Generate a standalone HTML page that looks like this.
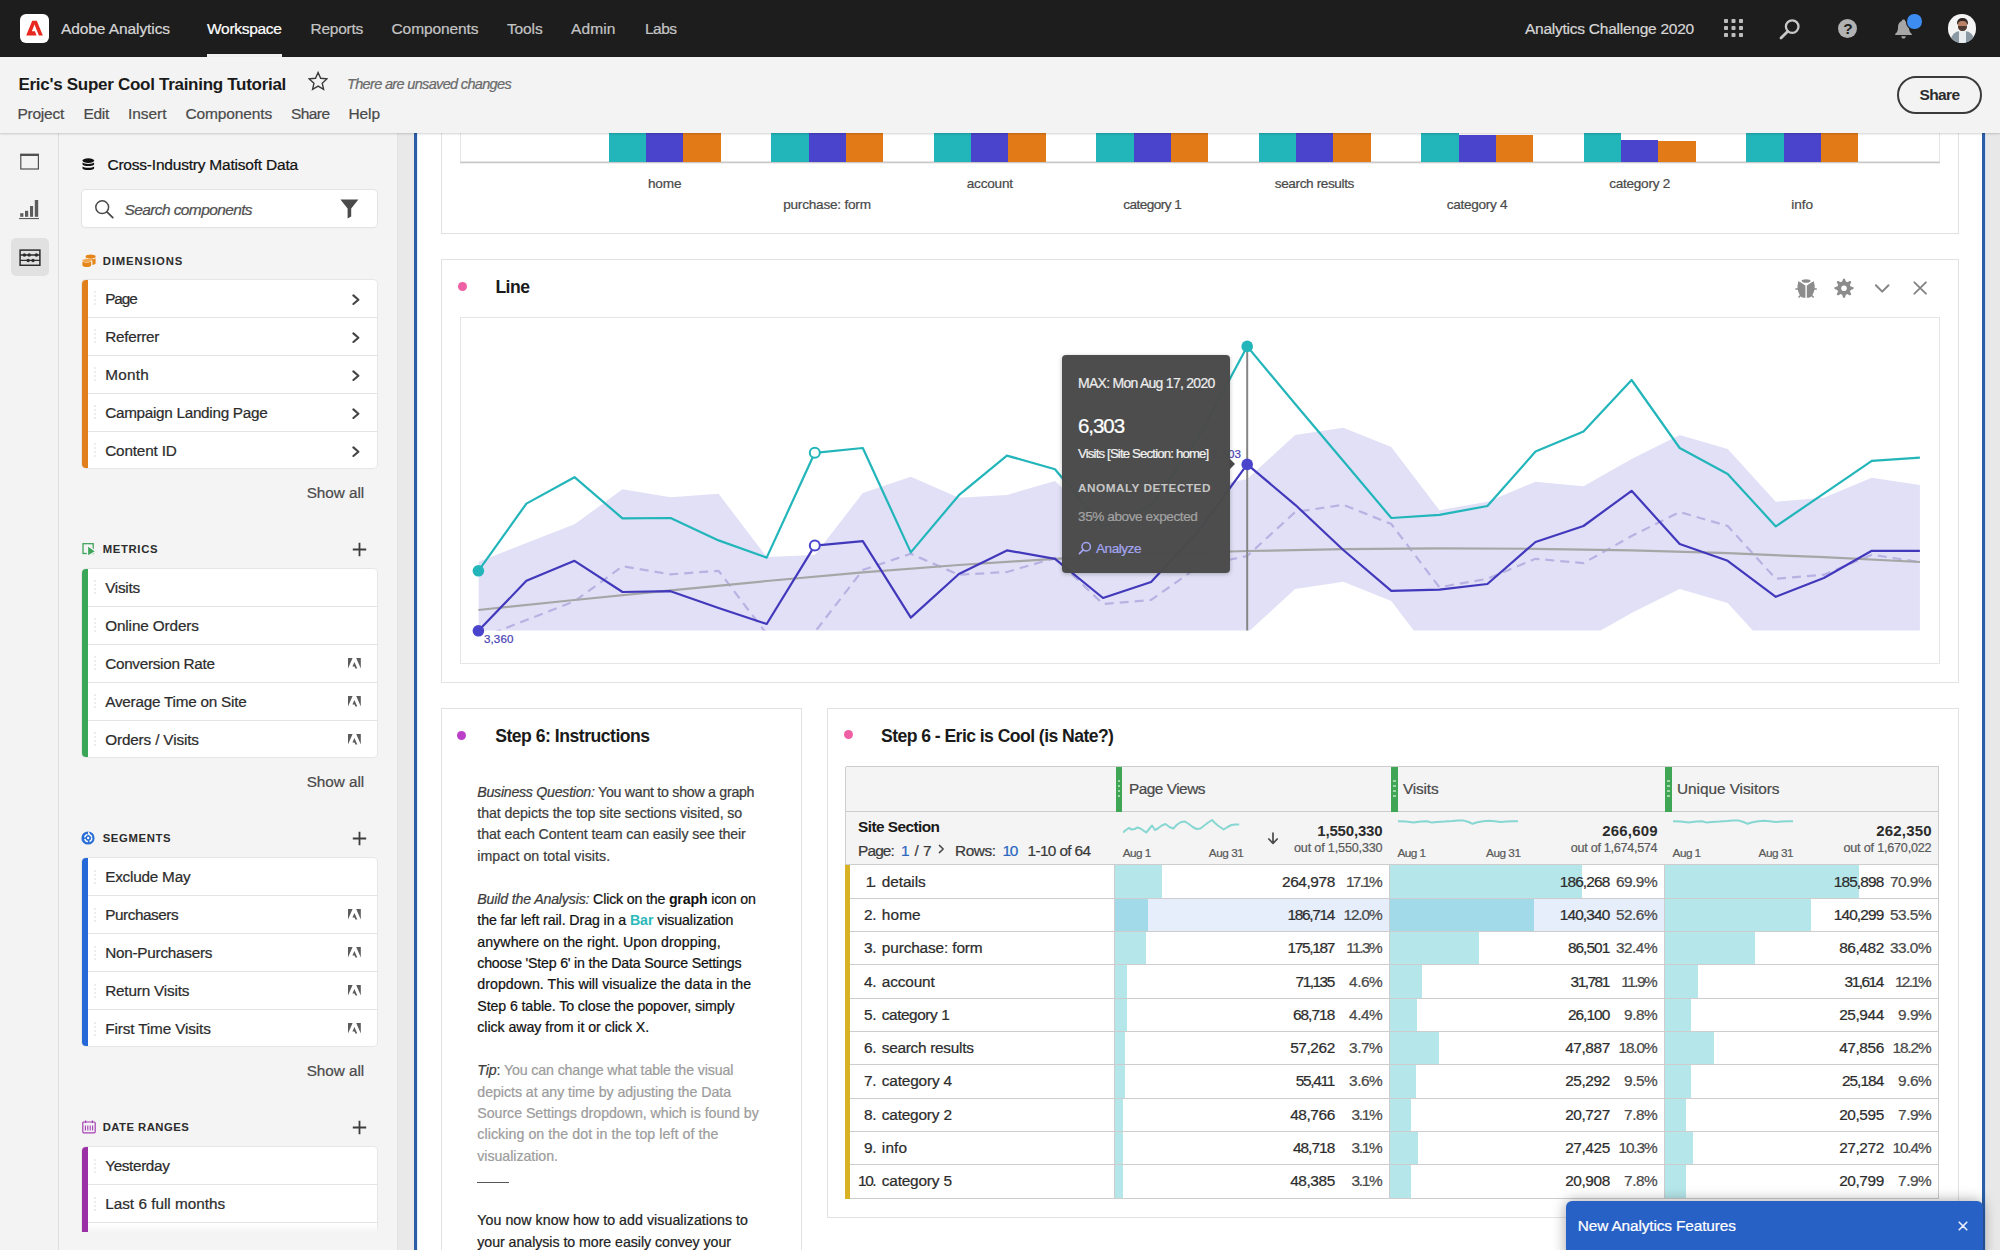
<!DOCTYPE html>
<html><head><meta charset="utf-8"><title>Adobe Analytics Workspace</title>
<style>
html,body{margin:0;padding:0;}
html{width:2000px;height:1250px;overflow:hidden;}
body{width:2000px;height:1250px;overflow:hidden;position:relative;background:#ffffff;font-family:"Liberation Sans",sans-serif;-webkit-font-smoothing:antialiased;}
div,svg{box-sizing:border-box;}
div{-webkit-text-stroke:0.22px currentColor;}
</style></head><body>
<div id="app" style="position:absolute;left:0;top:0;width:2000px;height:1250px;overflow:hidden;background:#fff;">
<div style="position:absolute;left:0px;top:0px;width:2000px;height:57px;background:#1d1d1d;"></div>
<div style="position:absolute;left:20px;top:14px;width:29px;height:29px;background:#fff;border-radius:6px;"></div>
<svg style="position:absolute;left:20px;top:14px" width="29" height="29" viewBox="0 0 29 29"><path d="M12.2 6.8 L16.8 6.8 L22.8 21.6 L18.9 21.6 L14.5 10.6 L11.9 17.2 L14.9 17.2 L16.6 21.6 L6.2 21.6 Z" fill="#e8281e"/></svg>
<div style="position:absolute;top:21.28px;font-size:15.5px;line-height:1;color:#d6d6d6;white-space:pre;letter-spacing:-0.086px;left:61.00px;">Adobe Analytics</div>
<div style="position:absolute;top:21.28px;font-size:15.5px;line-height:1;color:#ffffff;white-space:pre;letter-spacing:-0.294px;left:207.00px;">Workspace</div>
<div style="position:absolute;left:207px;top:54px;width:75px;height:3px;background:#f0f0f0;"></div>
<div style="position:absolute;top:21.28px;font-size:15.5px;line-height:1;color:#c4c4c4;white-space:pre;letter-spacing:-0.253px;left:310.50px;">Reports</div>
<div style="position:absolute;top:21.28px;font-size:15.5px;line-height:1;color:#c4c4c4;white-space:pre;letter-spacing:-0.089px;left:391.50px;">Components</div>
<div style="position:absolute;top:21.28px;font-size:15.5px;line-height:1;color:#c4c4c4;white-space:pre;letter-spacing:-0.137px;left:507.00px;">Tools</div>
<div style="position:absolute;top:21.28px;font-size:15.5px;line-height:1;color:#c4c4c4;white-space:pre;letter-spacing:0.113px;left:571.00px;">Admin</div>
<div style="position:absolute;top:21.28px;font-size:15.5px;line-height:1;color:#c4c4c4;white-space:pre;letter-spacing:-0.528px;left:645.00px;">Labs</div>
<div style="position:absolute;top:21.28px;font-size:15.5px;line-height:1;color:#d6d6d6;white-space:pre;letter-spacing:-0.247px;left:1525.00px;">Analytics Challenge 2020</div>
<svg style="position:absolute;left:1723.5px;top:19px" width="20" height="19"><rect x="0.0" y="0" width="4" height="4" rx="0.8" fill="#bdbdbd"/><rect x="7.5" y="0" width="4" height="4" rx="0.8" fill="#bdbdbd"/><rect x="15.0" y="0" width="4" height="4" rx="0.8" fill="#bdbdbd"/><rect x="0.0" y="7" width="4" height="4" rx="0.8" fill="#bdbdbd"/><rect x="7.5" y="7" width="4" height="4" rx="0.8" fill="#bdbdbd"/><rect x="15.0" y="7" width="4" height="4" rx="0.8" fill="#bdbdbd"/><rect x="0.0" y="14" width="4" height="4" rx="0.8" fill="#bdbdbd"/><rect x="7.5" y="14" width="4" height="4" rx="0.8" fill="#bdbdbd"/><rect x="15.0" y="14" width="4" height="4" rx="0.8" fill="#bdbdbd"/></svg>
<svg style="position:absolute;left:1778px;top:17px" width="24" height="24" viewBox="0 0 24 24"><circle cx="14.2" cy="9.6" r="6.3" fill="none" stroke="#c8c8c8" stroke-width="2.3"/><path d="M9.6 14.4 L3 21" stroke="#c8c8c8" stroke-width="2.8" stroke-linecap="round"/></svg>
<div style="position:absolute;left:1838.3px;top:19.2px;width:19px;height:19px;border-radius:50%;background:#b2b2b2;"></div>
<div style="position:absolute;top:21.48px;font-size:15.5px;line-height:1;color:#1d1d1d;white-space:pre;letter-spacing:0.000px;font-weight:bold;-webkit-text-stroke:0;left:1843.20px;">?</div>
<svg style="position:absolute;left:1894px;top:18px" width="20" height="22" viewBox="0 0 20 22"><path d="M9.5 1.5 C10.6 1.5 11.2 2.2 11.2 3 C14 3.9 15 6.5 15 9.5 C15 13.5 16.5 14.7 17.8 15.8 L17.8 17 L1.2 17 L1.2 15.8 C2.5 14.7 4 13.5 4 9.5 C4 6.5 5 3.9 7.8 3 C7.8 2.2 8.4 1.5 9.5 1.5 Z" fill="#a6a6a6"/><path d="M7.3 18.3 L11.7 18.3 C11.7 19.7 10.7 20.6 9.5 20.6 C8.3 20.6 7.3 19.7 7.3 18.3 Z" fill="#a6a6a6"/></svg>
<div style="position:absolute;left:1907.2px;top:14.3px;width:14.4px;height:14.4px;border-radius:50%;background:#3d8cf2;box-shadow:0 0 0 1.2px #1d1d1d;"></div>
<div style="position:absolute;left:1948px;top:14.2px;width:28.4px;height:28.4px;border-radius:50%;background:#f4f4f4;overflow:hidden;"><div style="position:absolute;left:9px;top:3.5px;width:11px;height:7px;border-radius:5px 5px 2px 2px;background:#2e2622;"></div><div style="position:absolute;left:10px;top:6.5px;width:9px;height:10px;border-radius:4px 4px 5px 5px;background:#b98267;"></div><div style="position:absolute;left:10px;top:12px;width:9px;height:5px;border-radius:0 0 5px 5px;background:#4a3a33;"></div><div style="position:absolute;left:3px;top:17px;width:23px;height:16px;border-radius:9px 9px 0 0;background:#8a99a3;"></div><div style="position:absolute;left:11px;top:17px;width:7px;height:12px;background:#e9edf0;"></div></div>
<div style="position:absolute;left:0px;top:57px;width:2000px;height:76px;background:#f3f3f3;box-shadow:0 1px 2px rgba(0,0,0,0.18);z-index:5;"></div>
<div style="position:absolute;top:75.91px;font-size:17px;line-height:1;color:#1a1a1a;white-space:pre;letter-spacing:-0.290px;font-weight:bold;-webkit-text-stroke:0;left:18.50px;z-index:6;">Eric&#x27;s Super Cool Training Tutorial</div>
<svg style="position:absolute;left:308px;top:71.4px;z-index:6" width="20.2" height="19.3" viewBox="0 0 22 21"><path d="M11 1.6 L13.8 7.9 L20.6 8.6 L15.5 13.2 L17 19.9 L11 16.4 L5 19.9 L6.5 13.2 L1.4 8.6 L8.2 7.9 Z" fill="none" stroke="#3a3a3a" stroke-width="1.5" stroke-linejoin="miter"/></svg>
<div style="position:absolute;top:76.83px;font-size:14.5px;line-height:1;color:#6a6a6a;white-space:pre;letter-spacing:-0.663px;font-style:italic;left:347.00px;z-index:6;">There are unsaved changes</div>
<div style="position:absolute;top:105.88px;font-size:15.5px;line-height:1;color:#4a4a4a;white-space:pre;letter-spacing:-0.249px;left:17.50px;z-index:6;">Project</div>
<div style="position:absolute;top:105.88px;font-size:15.5px;line-height:1;color:#4a4a4a;white-space:pre;letter-spacing:-0.302px;left:83.50px;z-index:6;">Edit</div>
<div style="position:absolute;top:105.88px;font-size:15.5px;line-height:1;color:#4a4a4a;white-space:pre;letter-spacing:-0.044px;left:128.00px;z-index:6;">Insert</div>
<div style="position:absolute;top:105.88px;font-size:15.5px;line-height:1;color:#4a4a4a;white-space:pre;letter-spacing:-0.139px;left:185.50px;z-index:6;">Components</div>
<div style="position:absolute;top:105.88px;font-size:15.5px;line-height:1;color:#4a4a4a;white-space:pre;letter-spacing:-0.573px;left:291.00px;z-index:6;">Share</div>
<div style="position:absolute;top:105.88px;font-size:15.5px;line-height:1;color:#4a4a4a;white-space:pre;letter-spacing:-0.095px;left:348.50px;z-index:6;">Help</div>
<div style="position:absolute;left:1896.8px;top:76.2px;width:85.2px;height:37.6px;border:2px solid #3a3a3a;border-radius:19px;z-index:6;"></div>
<div style="position:absolute;top:87.08px;font-size:15.5px;line-height:1;color:#2c2c2c;white-space:pre;letter-spacing:-0.616px;font-weight:bold;-webkit-text-stroke:0;left:1919.50px;z-index:6;">Share</div>
<div style="position:absolute;left:0px;top:133px;width:58px;height:1117px;background:#f3f3f3;"></div>
<div style="position:absolute;left:58px;top:133px;width:1.2px;height:1117px;background:#dedede;"></div>
<div style="position:absolute;left:59.2px;top:133px;width:337.8px;height:1117px;background:#f4f4f4;"></div>
<div style="position:absolute;left:397px;top:133px;width:1px;height:1117px;background:#e2e2e2;"></div>
<div style="position:absolute;left:398px;top:133px;width:17px;height:1117px;background:#e9e9e9;"></div>
<div style="position:absolute;left:414.3px;top:133px;width:2.6px;height:1117px;background:#2c5da6;"></div>
<div style="position:absolute;left:416.9px;top:133px;width:1px;height:1117px;background:#e3effc;"></div>
<svg style="position:absolute;left:19px;top:152px" width="22" height="20" viewBox="0 0 22 20"><rect x="1.8" y="2.4" width="17.6" height="14.6" fill="none" stroke="#505050" stroke-width="1.2"/><rect x="1.2" y="1.8" width="18.8" height="2.2" fill="#505050"/></svg>
<svg style="position:absolute;left:18px;top:199px" width="23" height="21" viewBox="0 0 23 21"><rect x="2.2" y="14.2" width="3.2" height="3.6" fill="#5c5c5c"/><rect x="7" y="11.8" width="3.2" height="6" fill="#5c5c5c"/><rect x="12" y="7" width="3.1" height="10.8" fill="#5c5c5c"/><rect x="16.8" y="1" width="3.4" height="16.8" fill="#5c5c5c"/><rect x="1" y="19" width="20" height="1.1" fill="#5c5c5c"/></svg>
<div style="position:absolute;left:11px;top:238.2px;width:37.8px;height:37.8px;border-radius:5px;background:#e1e1e1;"></div>
<svg style="position:absolute;left:18.7px;top:248.6px" width="22" height="17.5" viewBox="0 0 22 17.5"><rect x="1.1" y="1.1" width="19.8" height="15.2" fill="none" stroke="#2c2c2c" stroke-width="1.5"/><path d="M1 6 H21 M1 11.4 H21" stroke="#2c2c2c" stroke-width="1.3"/><circle cx="5.4" cy="6" r="1.75" fill="#2c2c2c"/><circle cx="10.2" cy="6" r="1.75" fill="#2c2c2c"/><circle cx="17.4" cy="6" r="1.75" fill="#2c2c2c"/><circle cx="9.2" cy="11.4" r="1.75" fill="#2c2c2c"/><circle cx="14" cy="11.4" r="1.75" fill="#2c2c2c"/></svg>
<svg style="position:absolute;left:82px;top:158px" width="13" height="13" viewBox="0 0 13 13"><ellipse cx="6.3" cy="2.6" rx="5.8" ry="2.3" fill="#111"/><path d="M0.5 4.6 C2 6.4 10.6 6.4 12.1 4.6 L12.1 6.6 C10.6 8.6 2 8.6 0.5 6.6 Z" fill="#111"/><path d="M0.5 8.4 C2 10.2 10.6 10.2 12.1 8.4 L12.1 10.4 C10.6 12.6 2 12.6 0.5 10.4 Z" fill="#111"/></svg>
<div style="position:absolute;top:157.08px;font-size:15.5px;line-height:1;color:#111;white-space:pre;letter-spacing:-0.207px;left:107.40px;">Cross-Industry Matisoft Data</div>
<div style="position:absolute;left:82px;top:190px;width:295.4px;height:36.6px;background:#fff;border-radius:4px;box-shadow:0 0 0 1px #e3e3e3,0 1px 2px rgba(0,0,0,0.06);"></div>
<svg style="position:absolute;left:93.5px;top:199px" width="21" height="20" viewBox="0 0 21 20"><circle cx="8.2" cy="8.2" r="6.4" fill="none" stroke="#4a4a4a" stroke-width="1.5"/><path d="M12.9 12.9 L18.8 18.6" stroke="#4a4a4a" stroke-width="1.8" stroke-linecap="round"/></svg>
<div style="position:absolute;top:201.88px;font-size:15.5px;line-height:1;color:#505050;white-space:pre;letter-spacing:-0.615px;font-style:italic;left:124.60px;">Search components</div>
<svg style="position:absolute;left:339.5px;top:198.5px" width="19" height="20" viewBox="0 0 19 20"><path d="M0.4 0.6 H18.4 L11.2 9.6 V17.6 L7.6 19.6 V9.6 Z" fill="#4a4a4a"/></svg>
<svg style="position:absolute;left:82px;top:253.5px" width="14" height="14" viewBox="0 0 14 14"><ellipse cx="8.6" cy="2.6" rx="5" ry="2.1" fill="#e68619"/><path d="M3.6 4.2 C5 5.8 12.2 5.8 13.6 4.2 L13.6 9.4 C12.8 10.4 11.4 10.8 10.4 10.9 L10.4 6.6 L3.6 6.2 Z" fill="#e68619"/><path d="M0.4 7.4 C1.8 8.8 7.8 8.8 9.2 7.4 L9.2 11.6 C7.8 13.6 1.8 13.6 0.4 11.6 Z" fill="#e68619"/><ellipse cx="4.8" cy="6.6" rx="4.4" ry="1.5" fill="#f4a94e"/></svg>
<div style="position:absolute;top:255.63px;font-size:11.3px;line-height:1;color:#2c2c2c;white-space:pre;letter-spacing:0.892px;font-weight:bold;-webkit-text-stroke:0;left:102.70px;">DIMENSIONS</div>
<div style="position:absolute;left:82px;top:279.5px;width:295px;height:188.2px;background:#fff;border-radius:4px;box-shadow:0 0 0 1px #e6e6e6;overflow:hidden;">
<div style="position:absolute;left:0;top:0;width:6px;height:100%;background:#e07f1c;"></div><div style="position:absolute;left:6px;top:37.4px;width:289px;height:1px;background:#e4e4e4;"></div><div style="position:absolute;left:6px;top:75.4px;width:289px;height:1px;background:#e4e4e4;"></div><div style="position:absolute;left:6px;top:113.4px;width:289px;height:1px;background:#e4e4e4;"></div><div style="position:absolute;left:6px;top:151.4px;width:289px;height:1px;background:#e4e4e4;"></div></div>
<div style="position:absolute;left:93.5px;top:291.3px;width:2px;height:14px;background:repeating-linear-gradient(#ededed 0 2px,#fff 2px 4px);"></div><div style="position:absolute;top:290.55px;font-size:15.3px;line-height:1;color:#2c2c2c;white-space:pre;letter-spacing:-1.033px;left:105.20px;">Page</div>
<svg style="position:absolute;left:351.5px;top:293.7px" width="9" height="12" viewBox="0 0 9 12"><path d="M1.4 1.4 L6.4 5.7 L1.4 10" stroke="#444" stroke-width="2.1" fill="none" stroke-linecap="round" stroke-linejoin="round"/></svg>
<div style="position:absolute;left:93.5px;top:329.3px;width:2px;height:14px;background:repeating-linear-gradient(#ededed 0 2px,#fff 2px 4px);"></div><div style="position:absolute;top:328.55px;font-size:15.3px;line-height:1;color:#2c2c2c;white-space:pre;letter-spacing:-0.264px;left:105.20px;">Referrer</div>
<svg style="position:absolute;left:351.5px;top:331.7px" width="9" height="12" viewBox="0 0 9 12"><path d="M1.4 1.4 L6.4 5.7 L1.4 10" stroke="#444" stroke-width="2.1" fill="none" stroke-linecap="round" stroke-linejoin="round"/></svg>
<div style="position:absolute;left:93.5px;top:367.3px;width:2px;height:14px;background:repeating-linear-gradient(#ededed 0 2px,#fff 2px 4px);"></div><div style="position:absolute;top:366.55px;font-size:15.3px;line-height:1;color:#2c2c2c;white-space:pre;letter-spacing:0.295px;left:105.20px;">Month</div>
<svg style="position:absolute;left:351.5px;top:369.7px" width="9" height="12" viewBox="0 0 9 12"><path d="M1.4 1.4 L6.4 5.7 L1.4 10" stroke="#444" stroke-width="2.1" fill="none" stroke-linecap="round" stroke-linejoin="round"/></svg>
<div style="position:absolute;left:93.5px;top:405.3px;width:2px;height:14px;background:repeating-linear-gradient(#ededed 0 2px,#fff 2px 4px);"></div><div style="position:absolute;top:404.55px;font-size:15.3px;line-height:1;color:#2c2c2c;white-space:pre;letter-spacing:-0.297px;left:105.20px;">Campaign Landing Page</div>
<svg style="position:absolute;left:351.5px;top:407.7px" width="9" height="12" viewBox="0 0 9 12"><path d="M1.4 1.4 L6.4 5.7 L1.4 10" stroke="#444" stroke-width="2.1" fill="none" stroke-linecap="round" stroke-linejoin="round"/></svg>
<div style="position:absolute;left:93.5px;top:443.3px;width:2px;height:14px;background:repeating-linear-gradient(#ededed 0 2px,#fff 2px 4px);"></div><div style="position:absolute;top:442.55px;font-size:15.3px;line-height:1;color:#2c2c2c;white-space:pre;letter-spacing:-0.164px;left:105.20px;">Content ID</div>
<svg style="position:absolute;left:351.5px;top:445.7px" width="9" height="12" viewBox="0 0 9 12"><path d="M1.4 1.4 L6.4 5.7 L1.4 10" stroke="#444" stroke-width="2.1" fill="none" stroke-linecap="round" stroke-linejoin="round"/></svg>
<div style="position:absolute;top:485.05px;font-size:15.3px;line-height:1;color:#4a4a4a;white-space:pre;letter-spacing:-0.042px;left:306.70px;">Show all</div>
<svg style="position:absolute;left:82px;top:541.5px" width="15" height="15" viewBox="0 0 15 15"><rect x="1" y="1.7" width="10.2" height="9.8" fill="none" stroke="#3da55a" stroke-width="1.3"/><path d="M5.5 3.4 L13.9 9.4 L5.5 14.2 Z" fill="#3da55a" stroke="#f4f4f4" stroke-width="1.3"/></svg>
<div style="position:absolute;top:543.63px;font-size:11.3px;line-height:1;color:#2c2c2c;white-space:pre;letter-spacing:0.664px;font-weight:bold;-webkit-text-stroke:0;left:102.70px;">METRICS</div>
<svg style="position:absolute;left:352px;top:541.5px" width="15" height="15" viewBox="0 0 15 15"><path d="M7.5 0.8 V14.2 M0.8 7.5 H14.2" stroke="#3c3c3c" stroke-width="1.8" fill="none"/></svg>
<div style="position:absolute;left:82px;top:568.5px;width:295px;height:188.2px;background:#fff;border-radius:4px;box-shadow:0 0 0 1px #e6e6e6;overflow:hidden;">
<div style="position:absolute;left:0;top:0;width:6px;height:100%;background:#3aa657;"></div><div style="position:absolute;left:6px;top:37.4px;width:289px;height:1px;background:#e4e4e4;"></div><div style="position:absolute;left:6px;top:75.4px;width:289px;height:1px;background:#e4e4e4;"></div><div style="position:absolute;left:6px;top:113.4px;width:289px;height:1px;background:#e4e4e4;"></div><div style="position:absolute;left:6px;top:151.4px;width:289px;height:1px;background:#e4e4e4;"></div></div>
<div style="position:absolute;left:93.5px;top:580.3px;width:2px;height:14px;background:repeating-linear-gradient(#ededed 0 2px,#fff 2px 4px);"></div><div style="position:absolute;top:579.55px;font-size:15.3px;line-height:1;color:#2c2c2c;white-space:pre;letter-spacing:-0.280px;left:105.20px;">Visits</div>
<div style="position:absolute;left:93.5px;top:618.3px;width:2px;height:14px;background:repeating-linear-gradient(#ededed 0 2px,#fff 2px 4px);"></div><div style="position:absolute;top:617.55px;font-size:15.3px;line-height:1;color:#2c2c2c;white-space:pre;letter-spacing:-0.126px;left:105.20px;">Online Orders</div>
<div style="position:absolute;left:93.5px;top:656.3px;width:2px;height:14px;background:repeating-linear-gradient(#ededed 0 2px,#fff 2px 4px);"></div><div style="position:absolute;top:655.55px;font-size:15.3px;line-height:1;color:#2c2c2c;white-space:pre;letter-spacing:-0.297px;left:105.20px;">Conversion Rate</div>
<svg style="position:absolute;left:348px;top:658.0999999999999px" width="13" height="11" viewBox="0 0 13 11"><path d="M0 0 L4.6 0 L0 10.6 Z M8.2 0 L12.8 0 L12.8 10.6 Z M6.4 3.9 L9.3 10.6 L7.4 10.6 L6.5 8.4 L4.4 8.4 Z" fill="#5c5c5c"/></svg>
<div style="position:absolute;left:93.5px;top:694.3px;width:2px;height:14px;background:repeating-linear-gradient(#ededed 0 2px,#fff 2px 4px);"></div><div style="position:absolute;top:693.55px;font-size:15.3px;line-height:1;color:#2c2c2c;white-space:pre;letter-spacing:-0.235px;left:105.20px;">Average Time on Site</div>
<svg style="position:absolute;left:348px;top:696.0999999999999px" width="13" height="11" viewBox="0 0 13 11"><path d="M0 0 L4.6 0 L0 10.6 Z M8.2 0 L12.8 0 L12.8 10.6 Z M6.4 3.9 L9.3 10.6 L7.4 10.6 L6.5 8.4 L4.4 8.4 Z" fill="#5c5c5c"/></svg>
<div style="position:absolute;left:93.5px;top:732.3px;width:2px;height:14px;background:repeating-linear-gradient(#ededed 0 2px,#fff 2px 4px);"></div><div style="position:absolute;top:731.55px;font-size:15.3px;line-height:1;color:#2c2c2c;white-space:pre;letter-spacing:-0.146px;left:105.20px;">Orders / Visits</div>
<svg style="position:absolute;left:348px;top:734.0999999999999px" width="13" height="11" viewBox="0 0 13 11"><path d="M0 0 L4.6 0 L0 10.6 Z M8.2 0 L12.8 0 L12.8 10.6 Z M6.4 3.9 L9.3 10.6 L7.4 10.6 L6.5 8.4 L4.4 8.4 Z" fill="#5c5c5c"/></svg>
<div style="position:absolute;top:774.05px;font-size:15.3px;line-height:1;color:#4a4a4a;white-space:pre;letter-spacing:-0.042px;left:306.70px;">Show all</div>
<svg style="position:absolute;left:80.8px;top:831px" width="14" height="14" viewBox="0 0 14 14"><circle cx="7" cy="7" r="6.6" fill="#2a6fd6"/><circle cx="7.2" cy="7" r="3.6" fill="none" stroke="#fff" stroke-width="1.4" stroke-dasharray="4.2 1.6"/><circle cx="7.2" cy="7" r="1.2" fill="#fff"/><path d="M7 0 L9.4 3.2 L7 4 Z" fill="#f4f4f4"/></svg>
<div style="position:absolute;top:832.93px;font-size:11.3px;line-height:1;color:#2c2c2c;white-space:pre;letter-spacing:0.636px;font-weight:bold;-webkit-text-stroke:0;left:102.70px;">SEGMENTS</div>
<svg style="position:absolute;left:352px;top:830.8px" width="15" height="15" viewBox="0 0 15 15"><path d="M7.5 0.8 V14.2 M0.8 7.5 H14.2" stroke="#3c3c3c" stroke-width="1.8" fill="none"/></svg>
<div style="position:absolute;left:82px;top:857.7px;width:295px;height:188.2px;background:#fff;border-radius:4px;box-shadow:0 0 0 1px #e6e6e6;overflow:hidden;">
<div style="position:absolute;left:0;top:0;width:6px;height:100%;background:#2768d8;"></div><div style="position:absolute;left:6px;top:37.4px;width:289px;height:1px;background:#e4e4e4;"></div><div style="position:absolute;left:6px;top:75.4px;width:289px;height:1px;background:#e4e4e4;"></div><div style="position:absolute;left:6px;top:113.4px;width:289px;height:1px;background:#e4e4e4;"></div><div style="position:absolute;left:6px;top:151.4px;width:289px;height:1px;background:#e4e4e4;"></div></div>
<div style="position:absolute;left:93.5px;top:869.5px;width:2px;height:14px;background:repeating-linear-gradient(#ededed 0 2px,#fff 2px 4px);"></div><div style="position:absolute;top:868.75px;font-size:15.3px;line-height:1;color:#2c2c2c;white-space:pre;letter-spacing:-0.217px;left:105.20px;">Exclude May</div>
<div style="position:absolute;left:93.5px;top:907.5px;width:2px;height:14px;background:repeating-linear-gradient(#ededed 0 2px,#fff 2px 4px);"></div><div style="position:absolute;top:906.75px;font-size:15.3px;line-height:1;color:#2c2c2c;white-space:pre;letter-spacing:-0.438px;left:105.20px;">Purchasers</div>
<svg style="position:absolute;left:348px;top:909.3px" width="13" height="11" viewBox="0 0 13 11"><path d="M0 0 L4.6 0 L0 10.6 Z M8.2 0 L12.8 0 L12.8 10.6 Z M6.4 3.9 L9.3 10.6 L7.4 10.6 L6.5 8.4 L4.4 8.4 Z" fill="#5c5c5c"/></svg>
<div style="position:absolute;left:93.5px;top:945.5px;width:2px;height:14px;background:repeating-linear-gradient(#ededed 0 2px,#fff 2px 4px);"></div><div style="position:absolute;top:944.75px;font-size:15.3px;line-height:1;color:#2c2c2c;white-space:pre;letter-spacing:-0.253px;left:105.20px;">Non-Purchasers</div>
<svg style="position:absolute;left:348px;top:947.3px" width="13" height="11" viewBox="0 0 13 11"><path d="M0 0 L4.6 0 L0 10.6 Z M8.2 0 L12.8 0 L12.8 10.6 Z M6.4 3.9 L9.3 10.6 L7.4 10.6 L6.5 8.4 L4.4 8.4 Z" fill="#5c5c5c"/></svg>
<div style="position:absolute;left:93.5px;top:983.5px;width:2px;height:14px;background:repeating-linear-gradient(#ededed 0 2px,#fff 2px 4px);"></div><div style="position:absolute;top:982.75px;font-size:15.3px;line-height:1;color:#2c2c2c;white-space:pre;letter-spacing:-0.189px;left:105.20px;">Return Visits</div>
<svg style="position:absolute;left:348px;top:985.3px" width="13" height="11" viewBox="0 0 13 11"><path d="M0 0 L4.6 0 L0 10.6 Z M8.2 0 L12.8 0 L12.8 10.6 Z M6.4 3.9 L9.3 10.6 L7.4 10.6 L6.5 8.4 L4.4 8.4 Z" fill="#5c5c5c"/></svg>
<div style="position:absolute;left:93.5px;top:1021.5px;width:2px;height:14px;background:repeating-linear-gradient(#ededed 0 2px,#fff 2px 4px);"></div><div style="position:absolute;top:1020.75px;font-size:15.3px;line-height:1;color:#2c2c2c;white-space:pre;letter-spacing:-0.128px;left:105.20px;">First Time Visits</div>
<svg style="position:absolute;left:348px;top:1023.3px" width="13" height="11" viewBox="0 0 13 11"><path d="M0 0 L4.6 0 L0 10.6 Z M8.2 0 L12.8 0 L12.8 10.6 Z M6.4 3.9 L9.3 10.6 L7.4 10.6 L6.5 8.4 L4.4 8.4 Z" fill="#5c5c5c"/></svg>
<div style="position:absolute;top:1063.45px;font-size:15.3px;line-height:1;color:#4a4a4a;white-space:pre;letter-spacing:-0.042px;left:306.70px;">Show all</div>
<svg style="position:absolute;left:81.5px;top:1120px" width="14" height="14" viewBox="0 0 14 14"><rect x="0.8" y="2" width="12.4" height="10.8" rx="1" fill="none" stroke="#a43fb4" stroke-width="1.2"/><path d="M3.6 0.4 V3 M10.4 0.4 V3" stroke="#a43fb4" stroke-width="1.3"/><path d="M3.4 5.4 V10.6 M5.8 5.4 V10.6 M8.2 5.4 V10.6 M10.6 5.4 V10.6" stroke="#a43fb4" stroke-width="1.1"/></svg>
<div style="position:absolute;top:1122.13px;font-size:11.3px;line-height:1;color:#2c2c2c;white-space:pre;letter-spacing:0.463px;font-weight:bold;-webkit-text-stroke:0;left:102.70px;">DATE RANGES</div>
<svg style="position:absolute;left:352px;top:1120.0px" width="15" height="15" viewBox="0 0 15 15"><path d="M7.5 0.8 V14.2 M0.8 7.5 H14.2" stroke="#3c3c3c" stroke-width="1.8" fill="none"/></svg>
<div style="position:absolute;left:82px;top:1147px;width:295px;height:112.2px;background:#fff;border-radius:4px;box-shadow:0 0 0 1px #e6e6e6;overflow:hidden;">
<div style="position:absolute;left:0;top:0;width:6px;height:100%;background:#9a2fa6;"></div><div style="position:absolute;left:6px;top:37.4px;width:289px;height:1px;background:#e4e4e4;"></div><div style="position:absolute;left:6px;top:75.4px;width:289px;height:1px;background:#e4e4e4;"></div></div>
<div style="position:absolute;left:93.5px;top:1158.8px;width:2px;height:14px;background:repeating-linear-gradient(#ededed 0 2px,#fff 2px 4px);"></div><div style="position:absolute;top:1158.05px;font-size:15.3px;line-height:1;color:#2c2c2c;white-space:pre;letter-spacing:-0.354px;left:105.20px;">Yesterday</div>
<div style="position:absolute;left:93.5px;top:1196.8px;width:2px;height:14px;background:repeating-linear-gradient(#ededed 0 2px,#fff 2px 4px);"></div><div style="position:absolute;top:1196.05px;font-size:15.3px;line-height:1;color:#2c2c2c;white-space:pre;letter-spacing:0.005px;left:105.20px;">Last 6 full months</div>
<div style="position:absolute;left:93.5px;top:1234.8px;width:2px;height:14px;background:repeating-linear-gradient(#ededed 0 2px,#fff 2px 4px);"></div><div style="position:absolute;top:1234.05px;font-size:15.3px;line-height:1;color:#2c2c2c;white-space:pre;letter-spacing:0.000px;left:105.20px;"></div>
<div style="position:absolute;left:88px;top:1224px;width:292px;height:40px;background:linear-gradient(rgba(244,244,244,0) 0,#f4f4f4 9px);"></div>
<div style="position:absolute;left:81px;top:1232px;width:8px;height:20px;background:#f4f4f4;"></div>
<div style="position:absolute;left:1982.3px;top:133px;width:2.6px;height:1117px;background:#2c5da6;"></div>
<div style="position:absolute;left:1984.9px;top:133px;width:15.1px;height:1117px;background:#e8e8e8;"></div>
<div style="position:absolute;left:1984.9px;top:133px;width:1px;height:1117px;background:#cfe0f6;"></div>
<div style="position:absolute;left:441px;top:100px;width:1517.5px;height:134.2px;border:1.5px solid #e2e2e2;"></div>
<div style="position:absolute;left:460px;top:100px;width:1479.5px;height:63px;border:1px solid #e6e6e6;border-bottom:none;"></div>
<div style="position:absolute;left:460px;top:161px;width:1479.5px;height:1px;background:#e4e4e4;"></div>
<div style="position:absolute;left:460px;top:162px;width:1479.5px;height:1px;background:#c9c9c9;"></div>
<div style="position:absolute;left:460px;top:163px;width:1479.5px;height:1px;background:#f0f0f0;"></div>
<div style="position:absolute;left:608.7px;top:133px;width:37.4px;height:29px;background:#22b5ba;"></div>
<div style="position:absolute;left:646.0px;top:133px;width:37.4px;height:29px;background:#4a44cc;"></div>
<div style="position:absolute;left:683.3px;top:133px;width:37.4px;height:29px;background:#e37a18;"></div>
<div style="position:absolute;left:771.2px;top:133px;width:37.4px;height:29px;background:#22b5ba;"></div>
<div style="position:absolute;left:808.5px;top:133px;width:37.4px;height:29px;background:#4a44cc;"></div>
<div style="position:absolute;left:845.8px;top:133px;width:37.4px;height:29px;background:#e37a18;"></div>
<div style="position:absolute;left:933.7px;top:133px;width:37.4px;height:29px;background:#22b5ba;"></div>
<div style="position:absolute;left:971.0px;top:133px;width:37.4px;height:29px;background:#4a44cc;"></div>
<div style="position:absolute;left:1008.3px;top:133px;width:37.4px;height:29px;background:#e37a18;"></div>
<div style="position:absolute;left:1096.2px;top:133px;width:37.4px;height:29px;background:#22b5ba;"></div>
<div style="position:absolute;left:1133.5px;top:133px;width:37.4px;height:29px;background:#4a44cc;"></div>
<div style="position:absolute;left:1170.8px;top:133px;width:37.4px;height:29px;background:#e37a18;"></div>
<div style="position:absolute;left:1258.7px;top:133px;width:37.4px;height:29px;background:#22b5ba;"></div>
<div style="position:absolute;left:1296.0px;top:133px;width:37.4px;height:29px;background:#4a44cc;"></div>
<div style="position:absolute;left:1333.3px;top:133px;width:37.4px;height:29px;background:#e37a18;"></div>
<div style="position:absolute;left:1421.2px;top:133px;width:37.4px;height:29px;background:#22b5ba;"></div>
<div style="position:absolute;left:1458.5px;top:135px;width:37.4px;height:27px;background:#4a44cc;"></div>
<div style="position:absolute;left:1495.8px;top:135px;width:37.4px;height:27px;background:#e37a18;"></div>
<div style="position:absolute;left:1583.7px;top:133px;width:37.4px;height:29px;background:#22b5ba;"></div>
<div style="position:absolute;left:1621.0px;top:140px;width:37.4px;height:22px;background:#4a44cc;"></div>
<div style="position:absolute;left:1658.3px;top:141px;width:37.4px;height:21px;background:#e37a18;"></div>
<div style="position:absolute;left:1746.2px;top:133px;width:37.4px;height:29px;background:#22b5ba;"></div>
<div style="position:absolute;left:1783.5px;top:133px;width:37.4px;height:29px;background:#4a44cc;"></div>
<div style="position:absolute;left:1820.8px;top:133px;width:37.4px;height:29px;background:#e37a18;"></div>
<div style="position:absolute;top:176.69px;font-size:13.6px;line-height:1;color:#4a4a4a;white-space:pre;letter-spacing:-0.105px;left:647.90px;">home</div>
<div style="position:absolute;top:198.29px;font-size:13.6px;line-height:1;color:#4a4a4a;white-space:pre;letter-spacing:-0.222px;left:783.20px;">purchase: form</div>
<div style="position:absolute;top:176.69px;font-size:13.6px;line-height:1;color:#4a4a4a;white-space:pre;letter-spacing:-0.233px;left:966.80px;">account</div>
<div style="position:absolute;top:198.29px;font-size:13.6px;line-height:1;color:#4a4a4a;white-space:pre;letter-spacing:-0.551px;left:1123.20px;">category 1</div>
<div style="position:absolute;top:176.69px;font-size:13.6px;line-height:1;color:#4a4a4a;white-space:pre;letter-spacing:-0.390px;left:1274.80px;">search results</div>
<div style="position:absolute;top:198.29px;font-size:13.6px;line-height:1;color:#4a4a4a;white-space:pre;letter-spacing:-0.311px;left:1446.80px;">category 4</div>
<div style="position:absolute;top:176.69px;font-size:13.6px;line-height:1;color:#4a4a4a;white-space:pre;letter-spacing:-0.271px;left:1609.20px;">category 2</div>
<div style="position:absolute;top:198.29px;font-size:13.6px;line-height:1;color:#4a4a4a;white-space:pre;letter-spacing:0.018px;left:1791.20px;">info</div>
<div style="position:absolute;left:441px;top:258.5px;width:1517.5px;height:424px;border:1.5px solid #e2e2e2;"></div>
<div style="position:absolute;left:458px;top:282px;width:9px;height:9px;border-radius:50%;background:#ee5fa4;"></div>
<div style="position:absolute;top:279.10px;font-size:17.6px;line-height:1;color:#1a1a1a;white-space:pre;letter-spacing:-0.545px;font-weight:bold;-webkit-text-stroke:0;left:495.40px;">Line</div>
<svg style="position:absolute;left:1793px;top:276px" width="26" height="24" viewBox="0 0 26 24"><ellipse cx="13.1" cy="4.9" rx="4.5" ry="1.75" fill="#8c8c8c"/><path d="M5.3 5.3 L8.2 6.2 L13.1 9.2 L18 6.2 L20.9 5.3 L21.2 7.2 C22 9.6 21.9 13 20.8 16 C19.9 18.6 18.6 20.6 17.4 21.2 C15.4 22 10.8 22 8.8 21.2 C7.6 20.6 6.3 18.6 5.4 16 C4.3 13 4.2 9.6 5 7.2 Z" fill="#8c8c8c"/><path d="M6 4.6 L13.1 9.3 L20.2 4.6" fill="none" stroke="#fff" stroke-width="1.15"/><path d="M13.1 9.3 V22.4" stroke="#fff" stroke-width="1.4"/><path d="M2.4 12.9 H6 M20.2 12.9 H23.8 M8.4 18.6 L5.6 21.6 M17.8 18.6 L20.6 21.6" stroke="#8c8c8c" stroke-width="1.5" fill="none"/></svg>
<svg style="position:absolute;left:1833px;top:277px" width="22" height="22" viewBox="0 0 22 22"><g transform="translate(11,11.2)"><path d="M-2 -6 L-0.9 -9.5 L0.9 -9.5 L2 -6 Z" transform="rotate(0)" fill="#8c8c8c"/><path d="M-2 -6 L-0.9 -9.5 L0.9 -9.5 L2 -6 Z" transform="rotate(45)" fill="#8c8c8c"/><path d="M-2 -6 L-0.9 -9.5 L0.9 -9.5 L2 -6 Z" transform="rotate(90)" fill="#8c8c8c"/><path d="M-2 -6 L-0.9 -9.5 L0.9 -9.5 L2 -6 Z" transform="rotate(135)" fill="#8c8c8c"/><path d="M-2 -6 L-0.9 -9.5 L0.9 -9.5 L2 -6 Z" transform="rotate(180)" fill="#8c8c8c"/><path d="M-2 -6 L-0.9 -9.5 L0.9 -9.5 L2 -6 Z" transform="rotate(225)" fill="#8c8c8c"/><path d="M-2 -6 L-0.9 -9.5 L0.9 -9.5 L2 -6 Z" transform="rotate(270)" fill="#8c8c8c"/><path d="M-2 -6 L-0.9 -9.5 L0.9 -9.5 L2 -6 Z" transform="rotate(315)" fill="#8c8c8c"/><circle r="6.9" fill="#8c8c8c"/><circle r="2.8" fill="#fff"/></g></svg>
<svg style="position:absolute;left:1874px;top:283px" width="17" height="11" viewBox="0 0 17 11"><path d="M1.9 2.2 L8.2 8.6 L14.5 2.2" fill="none" stroke="#858585" stroke-width="2" stroke-linecap="round" stroke-linejoin="round"/></svg>
<svg style="position:absolute;left:1913.2px;top:281.2px" width="15" height="14" viewBox="0 0 15 14"><path d="M1.4 1.3 L12.9 12.7 M12.9 1.3 L1.4 12.7" stroke="#858585" stroke-width="1.9" stroke-linecap="round"/></svg>
<div style="position:absolute;left:460px;top:317px;width:1479.5px;height:346.5px;border:1px solid #e6e6e6;"></div>
<svg style="position:absolute;left:0;top:300px" width="2000" height="380" viewBox="0 300 2000 380"><svg x="478.4" y="320" width="1442" height="310.6" viewBox="478.4 320 1442 310.6" overflow="hidden"><polygon points="478.4,561.8 526.4,543.0 574.5,524.3 622.5,489.3 670.6,497.3 718.6,493.8 766.7,557.0 814.8,555.0 862.8,493.0 910.8,476.8 958.9,497.8 1006.9,495.0 1055.0,481.0 1103.0,527.0 1151.1,523.0 1199.2,489.0 1247.2,479.0 1295.2,435.0 1343.3,427.8 1391.3,447.0 1439.4,510.2 1487.4,501.8 1535.5,481.8 1583.5,486.2 1631.6,459.0 1679.7,435.0 1727.7,449.0 1775.8,501.8 1823.8,497.8 1871.8,477.8 1919.9,485.0 1919.9,639.0 1871.8,631.8 1823.8,651.8 1775.8,655.8 1727.7,603.0 1679.7,589.0 1631.6,613.0 1583.5,640.2 1535.5,635.8 1487.4,655.8 1439.4,664.2 1391.3,601.0 1343.3,581.8 1295.2,589.0 1247.2,633.0 1199.2,643.0 1151.1,677.0 1103.0,681.0 1055.0,635.0 1006.9,649.0 958.9,651.8 910.8,630.8 862.8,647.0 814.8,709.0 766.7,711.0 718.6,647.8 670.6,651.3 622.5,643.3 574.5,678.3 526.4,697.0 478.4,715.8" fill="#e1e0f6"/><polyline points="478.4,638.8 526.4,620.0 574.5,601.3 622.5,566.3 670.6,574.3 718.6,570.8 766.7,634.0 814.8,632.0 862.8,570.0 910.8,553.8 958.9,574.8 1006.9,572.0 1055.0,558.0 1103.0,604.0 1151.1,600.0 1199.2,566.0 1247.2,556.0 1295.2,512.0 1343.3,504.8 1391.3,524.0 1439.4,587.2 1487.4,578.8 1535.5,558.8 1583.5,563.2 1631.6,536.0 1679.7,512.0 1727.7,526.0 1775.8,578.8 1823.8,574.8 1871.8,554.8 1919.9,562.0" fill="none" stroke="#b8b2e3" stroke-width="2.2" stroke-dasharray="9 6"/></svg><polyline points="478.4,610 574.5,600 670.8,590.3 766.8,581 862.8,572.4 958.8,565 1054.8,558.8 1150.8,554 1247,551 1343,549.2 1439,548.4 1535,548.8 1632,550.4 1728,553.2 1824,557.2 1920,562" fill="none" stroke="#a6a6a6" stroke-width="2.2"/><path d="M1247.2 346 V630.6" stroke="#858585" stroke-width="2"/><polyline points="478.4,570.8 526.4,503.6 574.5,477.2 622.5,518.4 670.6,518.0 718.6,540.4 766.7,557.6 814.8,452.8 862.8,448.0 910.8,552.4 958.9,495.2 1006.9,455.6 1055.0,469.2 1103.0,527.0 1151.1,505.6 1199.2,436.0 1247.2,346.4 1295.2,404.0 1343.3,461.0 1391.3,518.0 1439.4,514.8 1487.4,506.0 1535.5,451.6 1583.5,431.6 1631.6,380.0 1679.7,448.0 1727.7,474.0 1775.8,526.4 1823.8,493.6 1871.8,460.8 1919.9,457.6" fill="none" stroke="#22b5ba" stroke-width="2.2" stroke-linejoin="round"/><polyline points="478.4,630.8 526.4,580.8 574.5,560.8 622.5,592.0 670.6,591.2 718.6,608.0 766.7,624.0 814.8,545.6 862.8,541.2 910.8,617.6 958.9,574.0 1006.9,550.4 1055.0,558.8 1103.0,598.0 1151.1,582.0 1199.2,530.0 1247.2,464.4 1295.2,504.8 1343.3,550.0 1391.3,590.8 1439.4,589.6 1487.4,584.0 1535.5,542.0 1583.5,526.0 1631.6,490.8 1679.7,544.0 1727.7,560.8 1775.8,596.8 1823.8,578.0 1871.8,550.8 1919.9,550.8" fill="none" stroke="#4238bc" stroke-width="2.2" stroke-linejoin="round"/><circle cx="478.4" cy="570.8" r="5.8" fill="#22b5ba"/><circle cx="478.4" cy="630.8" r="5.8" fill="#4a44cc"/><circle cx="814.8" cy="452.8" r="5" fill="#fff" stroke="#22b5ba" stroke-width="2"/><circle cx="814.8" cy="545.6" r="5" fill="#fff" stroke="#4a44cc" stroke-width="2"/><circle cx="1247.2" cy="346.4" r="5.8" fill="#22b5ba"/><circle cx="1247.2" cy="464.4" r="5.8" fill="#4a44cc"/></svg>
<div style="position:absolute;top:632.98px;font-size:11.6px;line-height:1;color:#4a42b4;white-space:pre;letter-spacing:0.094px;left:484.00px;">3,360</div>
<div style="position:absolute;top:448.48px;font-size:11.6px;line-height:1;color:#4a42b4;white-space:pre;letter-spacing:0.094px;left:1211.50px;">6,303</div>
<div style="position:absolute;left:1062px;top:354.8px;width:167.5px;height:218.5px;background:rgba(74,74,74,0.985);border-radius:4px;box-shadow:0 1px 4px rgba(0,0,0,0.25);"></div>
<svg style="position:absolute;left:1229px;top:458px" width="7" height="12" viewBox="0 0 7 12"><path d="M0 0 L6 6 L0 12 Z" fill="#484848"/></svg>
<div style="position:absolute;top:376.05px;font-size:14px;line-height:1;color:#ececec;white-space:pre;letter-spacing:-0.727px;left:1078.00px;">MAX: Mon Aug 17, 2020</div>
<div style="position:absolute;top:416.05px;font-size:20.5px;line-height:1;color:#ffffff;white-space:pre;letter-spacing:-1.060px;left:1078.00px;">6,303</div>
<div style="position:absolute;top:447.03px;font-size:13.2px;line-height:1;color:#f2f2f2;white-space:pre;letter-spacing:-0.837px;left:1078.00px;">Visits [Site Section: home]</div>
<div style="position:absolute;top:482.91px;font-size:11.8px;line-height:1;color:#c6c6c6;white-space:pre;letter-spacing:0.486px;font-weight:bold;-webkit-text-stroke:0;left:1078.00px;">ANOMALY DETECTED</div>
<div style="position:absolute;top:509.69px;font-size:13.6px;line-height:1;color:#a2a2a2;white-space:pre;letter-spacing:-0.418px;left:1078.00px;">35% above expected</div>
<svg style="position:absolute;left:1077.5px;top:541px" width="14" height="14" viewBox="0 0 14 14"><circle cx="8.2" cy="5.8" r="4.2" fill="none" stroke="#a3a5f2" stroke-width="1.5"/><path d="M5.2 8.8 L1.4 12.6" stroke="#a3a5f2" stroke-width="1.7" stroke-linecap="round"/></svg>
<div style="position:absolute;top:541.69px;font-size:13.6px;line-height:1;color:#a3a5f2;white-space:pre;letter-spacing:-0.484px;left:1096.00px;">Analyze</div>
<div style="position:absolute;left:441px;top:707.5px;width:361px;height:600px;border:1.5px solid #e2e2e2;"></div>
<div style="position:absolute;left:456.7px;top:730.6px;width:9px;height:9px;border-radius:50%;background:#bb3fc9;"></div>
<div style="position:absolute;top:727.50px;font-size:17.6px;line-height:1;color:#1a1a1a;white-space:pre;letter-spacing:-0.490px;font-weight:bold;-webkit-text-stroke:0;left:495.20px;">Step 6: Instructions</div>
<div style="position:absolute;left:477.3px;top:784.58px;font-size:14.2px;line-height:1;color:#3c3c3c;white-space:pre;letter-spacing:-0.273px;"><span style="font-style:italic;">Business Question:</span> You want to show a graph</div>
<div style="position:absolute;left:477.3px;top:805.98px;font-size:14.2px;line-height:1;color:#3c3c3c;white-space:pre;letter-spacing:-0.088px;">that depicts the top site sections visited, so</div>
<div style="position:absolute;left:477.3px;top:827.38px;font-size:14.2px;line-height:1;color:#3c3c3c;white-space:pre;letter-spacing:-0.103px;">that each Content team can easily see their</div>
<div style="position:absolute;left:477.3px;top:848.78px;font-size:14.2px;line-height:1;color:#3c3c3c;white-space:pre;letter-spacing:0.052px;">impact on total visits.</div>
<div style="position:absolute;left:477.3px;top:891.78px;font-size:14.2px;line-height:1;color:#111111;white-space:pre;letter-spacing:-0.177px;"><span style="font-style:italic;color:#3c3c3c;">Build the Analysis:</span> Click on the <span style="font-weight:bold;-webkit-text-stroke:0;">graph</span> icon on</div>
<div style="position:absolute;left:477.3px;top:913.18px;font-size:14.2px;line-height:1;color:#111111;white-space:pre;letter-spacing:-0.093px;">the far left rail. Drag in a <span style="font-weight:bold;-webkit-text-stroke:0;color:#2bb9b9;">Bar</span> visualization</div>
<div style="position:absolute;left:477.3px;top:934.58px;font-size:14.2px;line-height:1;color:#111111;white-space:pre;letter-spacing:0.058px;">anywhere on the right. Upon dropping,</div>
<div style="position:absolute;left:477.3px;top:955.98px;font-size:14.2px;line-height:1;color:#111111;white-space:pre;letter-spacing:-0.205px;">choose &#x27;Step 6&#x27; in the Data Source Settings</div>
<div style="position:absolute;left:477.3px;top:977.38px;font-size:14.2px;line-height:1;color:#111111;white-space:pre;letter-spacing:0.028px;">dropdown. This will visualize the data in the</div>
<div style="position:absolute;left:477.3px;top:998.78px;font-size:14.2px;line-height:1;color:#111111;white-space:pre;letter-spacing:-0.103px;">Step 6 table. To close the popover, simply</div>
<div style="position:absolute;left:477.3px;top:1020.18px;font-size:14.2px;line-height:1;color:#111111;white-space:pre;letter-spacing:-0.053px;">click away from it or click X.</div>
<div style="position:absolute;left:477.3px;top:1063.18px;font-size:14.2px;line-height:1;color:#9c9c9c;white-space:pre;letter-spacing:-0.122px;"><span style="font-style:italic;color:#3c3c3c;">Tip</span><span style="color:#3c3c3c;">:</span> You can change what table the visual</div>
<div style="position:absolute;left:477.3px;top:1084.58px;font-size:14.2px;line-height:1;color:#9c9c9c;white-space:pre;letter-spacing:-0.045px;">depicts at any time by adjusting the Data</div>
<div style="position:absolute;left:477.3px;top:1105.98px;font-size:14.2px;line-height:1;color:#9c9c9c;white-space:pre;letter-spacing:-0.039px;">Source Settings dropdown, which is found by</div>
<div style="position:absolute;left:477.3px;top:1127.38px;font-size:14.2px;line-height:1;color:#9c9c9c;white-space:pre;letter-spacing:0.071px;">clicking on the dot in the top left of the</div>
<div style="position:absolute;left:477.3px;top:1148.78px;font-size:14.2px;line-height:1;color:#9c9c9c;white-space:pre;letter-spacing:-0.043px;">visualization.</div>
<div style="position:absolute;left:477.3px;top:1213.18px;font-size:14.2px;line-height:1;color:#222;white-space:pre;letter-spacing:0.057px;">You now know how to add visualizations to</div>
<div style="position:absolute;left:477.3px;top:1234.58px;font-size:14.2px;line-height:1;color:#222;white-space:pre;letter-spacing:-0.045px;">your analysis to more easily convey your</div>
<div style="position:absolute;left:477.3px;top:1182.2px;width:31.5px;height:1.3px;background:#555;"></div>
<div style="position:absolute;left:826.5px;top:707.5px;width:1132px;height:510.5px;border:1.5px solid #e2e2e2;"></div>
<div style="position:absolute;left:844px;top:730.4px;width:9px;height:9px;border-radius:50%;background:#ee5fa4;"></div>
<div style="position:absolute;top:727.50px;font-size:17.6px;line-height:1;color:#1a1a1a;white-space:pre;letter-spacing:-0.558px;font-weight:bold;-webkit-text-stroke:0;left:881.00px;">Step 6 - Eric is Cool (is Nate?)</div>
<div style="position:absolute;left:845.5px;top:766.5px;width:1093.1px;height:98.5px;background:#f4f4f4;"></div>
<div style="position:absolute;left:1114.7px;top:865.0px;width:47.0px;height:33.3px;background:#b5e6e9;"></div>
<div style="position:absolute;left:1389.8px;top:865.0px;width:191.9px;height:33.3px;background:#b5e6e9;"></div>
<div style="position:absolute;left:1664.4px;top:865.0px;width:194.4px;height:33.3px;background:#b5e6e9;"></div>
<div style="position:absolute;left:1114.7px;top:898.3px;width:275.0999999999999px;height:33.3px;background:#e6eefc;"></div>
<div style="position:absolute;left:1114.7px;top:898.3px;width:33.0px;height:33.3px;background:#a2dae9;"></div>
<div style="position:absolute;left:1389.8px;top:898.3px;width:274.60000000000014px;height:33.3px;background:#e6eefc;"></div>
<div style="position:absolute;left:1389.8px;top:898.3px;width:144.4px;height:33.3px;background:#a2dae9;"></div>
<div style="position:absolute;left:1664.4px;top:898.3px;width:146.7px;height:33.3px;background:#b5e6e9;"></div>
<div style="position:absolute;left:1114.7px;top:931.6px;width:31.1px;height:33.3px;background:#b5e6e9;"></div>
<div style="position:absolute;left:1389.8px;top:931.6px;width:89.0px;height:33.3px;background:#b5e6e9;"></div>
<div style="position:absolute;left:1664.4px;top:931.6px;width:90.5px;height:33.3px;background:#b5e6e9;"></div>
<div style="position:absolute;left:1114.7px;top:964.9px;width:12.7px;height:33.3px;background:#b5e6e9;"></div>
<div style="position:absolute;left:1389.8px;top:964.9px;width:32.7px;height:33.3px;background:#b5e6e9;"></div>
<div style="position:absolute;left:1664.4px;top:964.9px;width:33.2px;height:33.3px;background:#b5e6e9;"></div>
<div style="position:absolute;left:1114.7px;top:998.2px;width:12.1px;height:33.3px;background:#b5e6e9;"></div>
<div style="position:absolute;left:1389.8px;top:998.2px;width:26.9px;height:33.3px;background:#b5e6e9;"></div>
<div style="position:absolute;left:1664.4px;top:998.2px;width:27.1px;height:33.3px;background:#b5e6e9;"></div>
<div style="position:absolute;left:1114.7px;top:1031.5px;width:10.2px;height:33.3px;background:#b5e6e9;"></div>
<div style="position:absolute;left:1389.8px;top:1031.5px;width:49.4px;height:33.3px;background:#b5e6e9;"></div>
<div style="position:absolute;left:1664.4px;top:1031.5px;width:49.9px;height:33.3px;background:#b5e6e9;"></div>
<div style="position:absolute;left:1114.7px;top:1064.8px;width:9.9px;height:33.3px;background:#b5e6e9;"></div>
<div style="position:absolute;left:1389.8px;top:1064.8px;width:26.1px;height:33.3px;background:#b5e6e9;"></div>
<div style="position:absolute;left:1664.4px;top:1064.8px;width:26.3px;height:33.3px;background:#b5e6e9;"></div>
<div style="position:absolute;left:1114.7px;top:1098.1px;width:8.5px;height:33.3px;background:#b5e6e9;"></div>
<div style="position:absolute;left:1389.8px;top:1098.1px;width:21.4px;height:33.3px;background:#b5e6e9;"></div>
<div style="position:absolute;left:1664.4px;top:1098.1px;width:21.7px;height:33.3px;background:#b5e6e9;"></div>
<div style="position:absolute;left:1114.7px;top:1131.4px;width:8.5px;height:33.3px;background:#b5e6e9;"></div>
<div style="position:absolute;left:1389.8px;top:1131.4px;width:28.3px;height:33.3px;background:#b5e6e9;"></div>
<div style="position:absolute;left:1664.4px;top:1131.4px;width:28.5px;height:33.3px;background:#b5e6e9;"></div>
<div style="position:absolute;left:1114.7px;top:1164.7px;width:8.5px;height:33.3px;background:#b5e6e9;"></div>
<div style="position:absolute;left:1389.8px;top:1164.7px;width:21.4px;height:33.3px;background:#b5e6e9;"></div>
<div style="position:absolute;left:1664.4px;top:1164.7px;width:21.7px;height:33.3px;background:#b5e6e9;"></div>
<div style="position:absolute;left:845.5px;top:864px;width:1093.1px;height:1px;background:#cdcdcd;"></div>
<div style="position:absolute;left:845.5px;top:898px;width:1093.1px;height:1px;background:#cdcdcd;"></div>
<div style="position:absolute;left:845.5px;top:931px;width:1093.1px;height:1px;background:#cdcdcd;"></div>
<div style="position:absolute;left:845.5px;top:964px;width:1093.1px;height:1px;background:#cdcdcd;"></div>
<div style="position:absolute;left:845.5px;top:998px;width:1093.1px;height:1px;background:#cdcdcd;"></div>
<div style="position:absolute;left:845.5px;top:1031px;width:1093.1px;height:1px;background:#cdcdcd;"></div>
<div style="position:absolute;left:845.5px;top:1064px;width:1093.1px;height:1px;background:#cdcdcd;"></div>
<div style="position:absolute;left:845.5px;top:1098px;width:1093.1px;height:1px;background:#cdcdcd;"></div>
<div style="position:absolute;left:845.5px;top:1131px;width:1093.1px;height:1px;background:#cdcdcd;"></div>
<div style="position:absolute;left:845.5px;top:1164px;width:1093.1px;height:1px;background:#cdcdcd;"></div>
<div style="position:absolute;left:845.5px;top:1198px;width:1093.1px;height:1px;background:#cdcdcd;"></div>
<div style="position:absolute;left:845.5px;top:766px;width:1093.1px;height:1px;background:#cdcdcd;"></div>
<div style="position:absolute;left:845.5px;top:811px;width:1093.1px;height:1px;background:#cdcdcd;"></div>
<div style="position:absolute;left:845px;top:766.5px;width:1px;height:98.5px;background:#cdcdcd;"></div>
<div style="position:absolute;left:1114px;top:865px;width:1px;height:333.0px;background:#cdcdcd;"></div>
<div style="position:absolute;left:1389px;top:865px;width:1px;height:333.0px;background:#cdcdcd;"></div>
<div style="position:absolute;left:1664px;top:865px;width:1px;height:333.0px;background:#cdcdcd;"></div>
<div style="position:absolute;left:1938px;top:766.5px;width:1px;height:431.5px;background:#cdcdcd;"></div>
<div style="position:absolute;left:845.0px;top:865px;width:5px;height:333.5px;background:#d8b125;"></div>
<div style="position:absolute;left:1116px;top:766.5px;width:6.4px;height:45.0px;background:#3ea654;"></div>
<div style="position:absolute;left:1118px;top:779.5px;width:2.4px;height:20px;background:repeating-linear-gradient(#9fd7a8 0 2.4px,#3ea654 2.4px 5px);"></div>
<div style="position:absolute;left:1391.3px;top:766.5px;width:6.4px;height:45.0px;background:#3ea654;"></div>
<div style="position:absolute;left:1393.3px;top:779.5px;width:2.4px;height:20px;background:repeating-linear-gradient(#9fd7a8 0 2.4px,#3ea654 2.4px 5px);"></div>
<div style="position:absolute;left:1665.4px;top:766.5px;width:6.4px;height:45.0px;background:#3ea654;"></div>
<div style="position:absolute;left:1667.4px;top:779.5px;width:2.4px;height:20px;background:repeating-linear-gradient(#9fd7a8 0 2.4px,#3ea654 2.4px 5px);"></div>
<div style="position:absolute;top:780.66px;font-size:15.4px;line-height:1;color:#4a4a4a;white-space:pre;letter-spacing:-0.505px;left:1129.00px;">Page Views</div>
<div style="position:absolute;top:780.66px;font-size:15.4px;line-height:1;color:#4a4a4a;white-space:pre;letter-spacing:-0.169px;left:1403.00px;">Visits</div>
<div style="position:absolute;top:780.66px;font-size:15.4px;line-height:1;color:#4a4a4a;white-space:pre;letter-spacing:-0.053px;left:1677.00px;">Unique Visitors</div>
<div style="position:absolute;top:818.76px;font-size:15.4px;line-height:1;color:#1a1a1a;white-space:pre;letter-spacing:-0.554px;font-weight:bold;-webkit-text-stroke:0;left:858.00px;">Site Section</div>
<div style="position:absolute;top:842.76px;font-size:15.4px;line-height:1;color:#3a3a3a;white-space:pre;letter-spacing:-0.849px;left:858.00px;">Page:</div>
<div style="position:absolute;top:842.76px;font-size:15.4px;line-height:1;color:#2a66c0;white-space:pre;letter-spacing:-2.065px;left:901.00px;">1</div>
<div style="position:absolute;top:842.76px;font-size:15.4px;line-height:1;color:#3a3a3a;white-space:pre;letter-spacing:-0.041px;left:914.50px;">/ 7</div>
<svg style="position:absolute;left:937.5px;top:844px" width="7" height="10" viewBox="0 0 7 10"><path d="M1.4 1.4 L5.2 5 L1.4 8.6" fill="none" stroke="#4a4a4a" stroke-width="1.5" stroke-linecap="round" stroke-linejoin="round"/></svg>
<div style="position:absolute;top:842.76px;font-size:15.4px;line-height:1;color:#3a3a3a;white-space:pre;letter-spacing:-0.457px;left:955.00px;">Rows:</div>
<div style="position:absolute;top:842.76px;font-size:15.4px;line-height:1;color:#2a66c0;white-space:pre;letter-spacing:-1.315px;left:1002.50px;">10</div>
<div style="position:absolute;top:842.76px;font-size:15.4px;line-height:1;color:#3a3a3a;white-space:pre;letter-spacing:-0.635px;left:1027.50px;">1-10 of 64</div>
<svg style="position:absolute;left:1122.5px;top:818px" width="121" height="22" viewBox="0 0 125 22" preserveAspectRatio="none"><polyline points="0,14.5 3,12 6,10 9,11.5 12,11 15,9.5 18,10.5 21,12.5 24,14.5 27,11 30,7.5 33,12 36,10.5 40,7.5 44,6 48,9 52,10.5 56,6.5 60,4 64,3.5 68,6 72,9 76,11 80,10.5 84,7.5 88,4.5 92,2 95,5 98,7.5 101,9.5 104,11.5 108,9 112,7 116,6.5 120,6.5" fill="none" stroke="#86d6d2" stroke-width="2" stroke-linejoin="round"/></svg>
<svg style="position:absolute;left:1397.6px;top:816.4px" width="121" height="22" viewBox="0 0 125 22" preserveAspectRatio="none"><polyline points="0,5.2 8,5.6 16,6.4 24,5.6 30,5.2 35,6.6 40,6 48,5.6 56,5 62,4.4 68,4.6 73,6 77,7.8 82,6.2 88,5.2 94,4.8 100,5.2 106,6 112,5.6 118,5.2 124,5.2" fill="none" stroke="#86d6d2" stroke-width="2" stroke-linejoin="round"/></svg>
<svg style="position:absolute;left:1672.6px;top:816.4px" width="121" height="22" viewBox="0 0 125 22" preserveAspectRatio="none"><polyline points="0,5.2 8,5.6 16,6.4 24,5.6 30,5.2 35,6.6 40,6 48,5.6 56,5 62,4.4 68,4.6 73,6 77,7.8 82,6.2 88,5.2 94,4.8 100,5.2 106,6 112,5.6 118,5.2 124,5.2" fill="none" stroke="#86d6d2" stroke-width="2" stroke-linejoin="round"/></svg>
<div style="position:absolute;top:847.71px;font-size:11.8px;line-height:1;color:#5a5a5a;white-space:pre;letter-spacing:-0.568px;left:1122.80px;">Aug 1</div>
<div style="position:absolute;top:847.71px;font-size:11.8px;line-height:1;color:#5a5a5a;white-space:pre;letter-spacing:-0.568px;left:1397.50px;">Aug 1</div>
<div style="position:absolute;top:847.71px;font-size:11.8px;line-height:1;color:#5a5a5a;white-space:pre;letter-spacing:-0.568px;left:1672.60px;">Aug 1</div>
<div style="position:absolute;top:847.71px;font-size:11.8px;line-height:1;color:#5a5a5a;white-space:pre;letter-spacing:-0.483px;left:1208.80px;">Aug 31</div>
<div style="position:absolute;top:847.71px;font-size:11.8px;line-height:1;color:#5a5a5a;white-space:pre;letter-spacing:-0.483px;left:1486.00px;">Aug 31</div>
<div style="position:absolute;top:847.71px;font-size:11.8px;line-height:1;color:#5a5a5a;white-space:pre;letter-spacing:-0.483px;left:1758.60px;">Aug 31</div>
<svg style="position:absolute;left:1266.5px;top:831.5px" width="12" height="13" viewBox="0 0 12 13"><path d="M6 1 V11 M1.8 7 L6 11.4 L10.2 7" fill="none" stroke="#4a4a4a" stroke-width="1.7" stroke-linecap="round" stroke-linejoin="round"/></svg>
<div style="position:absolute;top:822.50px;font-size:15px;line-height:1;color:#2c2c2c;white-space:pre;letter-spacing:-0.170px;font-weight:bold;-webkit-text-stroke:0;right:617.57px;">1,550,330</div>
<div style="position:absolute;top:841.53px;font-size:12.6px;line-height:1;color:#5a5a5a;white-space:pre;letter-spacing:-0.161px;right:617.56px;">out of 1,550,330</div>
<div style="position:absolute;top:822.50px;font-size:15px;line-height:1;color:#2c2c2c;white-space:pre;letter-spacing:0.197px;font-weight:bold;-webkit-text-stroke:0;right:342.20px;">266,609</div>
<div style="position:absolute;top:841.53px;font-size:12.6px;line-height:1;color:#5a5a5a;white-space:pre;letter-spacing:-0.286px;right:342.69px;">out of 1,674,574</div>
<div style="position:absolute;top:822.50px;font-size:15px;line-height:1;color:#2c2c2c;white-space:pre;letter-spacing:0.197px;font-weight:bold;-webkit-text-stroke:0;right:68.20px;">262,350</div>
<div style="position:absolute;top:841.53px;font-size:12.6px;line-height:1;color:#5a5a5a;white-space:pre;letter-spacing:-0.193px;right:68.59px;">out of 1,670,022</div>
<div style="position:absolute;top:873.66px;font-size:15.4px;line-height:1;color:#2c2c2c;white-space:pre;letter-spacing:-1.872px;right:1125.27px;">1.</div>
<div style="position:absolute;top:873.66px;font-size:15.4px;line-height:1;color:#2c2c2c;white-space:pre;letter-spacing:-0.102px;left:881.80px;">details</div>
<div style="position:absolute;top:873.66px;font-size:15.4px;line-height:1;color:#2c2c2c;white-space:pre;letter-spacing:-0.410px;right:665.21px;">264,978</div>
<div style="position:absolute;top:873.66px;font-size:15.4px;line-height:1;color:#4a4a4a;white-space:pre;letter-spacing:-1.773px;right:619.17px;">17.1%</div>
<div style="position:absolute;top:873.66px;font-size:15.4px;line-height:1;color:#2c2c2c;white-space:pre;letter-spacing:-0.867px;right:390.67px;">186,268</div>
<div style="position:absolute;top:873.66px;font-size:15.4px;line-height:1;color:#4a4a4a;white-space:pre;letter-spacing:-0.493px;right:342.89px;">69.9%</div>
<div style="position:absolute;top:873.66px;font-size:15.4px;line-height:1;color:#2c2c2c;white-space:pre;letter-spacing:-0.867px;right:116.67px;">185,898</div>
<div style="position:absolute;top:873.66px;font-size:15.4px;line-height:1;color:#4a4a4a;white-space:pre;letter-spacing:-0.493px;right:68.89px;">70.9%</div>
<div style="position:absolute;top:906.96px;font-size:15.4px;line-height:1;color:#2c2c2c;white-space:pre;letter-spacing:-0.272px;right:1123.67px;">2.</div>
<div style="position:absolute;top:906.96px;font-size:15.4px;line-height:1;color:#2c2c2c;white-space:pre;letter-spacing:0.119px;left:881.80px;">home</div>
<div style="position:absolute;top:906.96px;font-size:15.4px;line-height:1;color:#2c2c2c;white-space:pre;letter-spacing:-1.324px;right:666.12px;">186,714</div>
<div style="position:absolute;top:906.96px;font-size:15.4px;line-height:1;color:#4a4a4a;white-space:pre;letter-spacing:-1.133px;right:618.53px;">12.0%</div>
<div style="position:absolute;top:906.96px;font-size:15.4px;line-height:1;color:#2c2c2c;white-space:pre;letter-spacing:-0.867px;right:390.67px;">140,340</div>
<div style="position:absolute;top:906.96px;font-size:15.4px;line-height:1;color:#4a4a4a;white-space:pre;letter-spacing:-0.493px;right:342.89px;">52.6%</div>
<div style="position:absolute;top:906.96px;font-size:15.4px;line-height:1;color:#2c2c2c;white-space:pre;letter-spacing:-0.867px;right:116.67px;">140,299</div>
<div style="position:absolute;top:906.96px;font-size:15.4px;line-height:1;color:#4a4a4a;white-space:pre;letter-spacing:-0.493px;right:68.89px;">53.5%</div>
<div style="position:absolute;top:940.26px;font-size:15.4px;line-height:1;color:#2c2c2c;white-space:pre;letter-spacing:-0.272px;right:1123.67px;">3.</div>
<div style="position:absolute;top:940.26px;font-size:15.4px;line-height:1;color:#2c2c2c;white-space:pre;letter-spacing:-0.137px;left:881.80px;">purchase: form</div>
<div style="position:absolute;top:940.26px;font-size:15.4px;line-height:1;color:#2c2c2c;white-space:pre;letter-spacing:-1.324px;right:666.12px;">175,187</div>
<div style="position:absolute;top:940.26px;font-size:15.4px;line-height:1;color:#4a4a4a;white-space:pre;letter-spacing:-1.545px;right:618.94px;">11.3%</div>
<div style="position:absolute;top:940.26px;font-size:15.4px;line-height:1;color:#2c2c2c;white-space:pre;letter-spacing:-0.951px;right:390.75px;">86,501</div>
<div style="position:absolute;top:940.26px;font-size:15.4px;line-height:1;color:#4a4a4a;white-space:pre;letter-spacing:-0.493px;right:342.89px;">32.4%</div>
<div style="position:absolute;top:940.26px;font-size:15.4px;line-height:1;color:#2c2c2c;white-space:pre;letter-spacing:-0.417px;right:116.22px;">86,482</div>
<div style="position:absolute;top:940.26px;font-size:15.4px;line-height:1;color:#4a4a4a;white-space:pre;letter-spacing:-0.493px;right:68.89px;">33.0%</div>
<div style="position:absolute;top:973.56px;font-size:15.4px;line-height:1;color:#2c2c2c;white-space:pre;letter-spacing:-0.272px;right:1123.67px;">4.</div>
<div style="position:absolute;top:973.56px;font-size:15.4px;line-height:1;color:#2c2c2c;white-space:pre;letter-spacing:-0.163px;left:881.80px;">account</div>
<div style="position:absolute;top:973.56px;font-size:15.4px;line-height:1;color:#2c2c2c;white-space:pre;letter-spacing:-1.484px;right:666.28px;">71,135</div>
<div style="position:absolute;top:973.56px;font-size:15.4px;line-height:1;color:#4a4a4a;white-space:pre;letter-spacing:-0.525px;right:617.93px;">4.6%</div>
<div style="position:absolute;top:973.56px;font-size:15.4px;line-height:1;color:#2c2c2c;white-space:pre;letter-spacing:-1.484px;right:391.28px;">31,781</div>
<div style="position:absolute;top:973.56px;font-size:15.4px;line-height:1;color:#4a4a4a;white-space:pre;letter-spacing:-1.545px;right:343.94px;">11.9%</div>
<div style="position:absolute;top:973.56px;font-size:15.4px;line-height:1;color:#2c2c2c;white-space:pre;letter-spacing:-1.484px;right:117.28px;">31,614</div>
<div style="position:absolute;top:973.56px;font-size:15.4px;line-height:1;color:#4a4a4a;white-space:pre;letter-spacing:-1.773px;right:70.17px;">12.1%</div>
<div style="position:absolute;top:1006.86px;font-size:15.4px;line-height:1;color:#2c2c2c;white-space:pre;letter-spacing:-0.272px;right:1123.67px;">5.</div>
<div style="position:absolute;top:1006.86px;font-size:15.4px;line-height:1;color:#2c2c2c;white-space:pre;letter-spacing:-0.441px;left:881.80px;">category 1</div>
<div style="position:absolute;top:1006.86px;font-size:15.4px;line-height:1;color:#2c2c2c;white-space:pre;letter-spacing:-0.951px;right:665.75px;">68,718</div>
<div style="position:absolute;top:1006.86px;font-size:15.4px;line-height:1;color:#4a4a4a;white-space:pre;letter-spacing:-0.525px;right:617.93px;">4.4%</div>
<div style="position:absolute;top:1006.86px;font-size:15.4px;line-height:1;color:#2c2c2c;white-space:pre;letter-spacing:-0.951px;right:390.75px;">26,100</div>
<div style="position:absolute;top:1006.86px;font-size:15.4px;line-height:1;color:#4a4a4a;white-space:pre;letter-spacing:-0.525px;right:342.93px;">9.8%</div>
<div style="position:absolute;top:1006.86px;font-size:15.4px;line-height:1;color:#2c2c2c;white-space:pre;letter-spacing:-0.417px;right:116.22px;">25,944</div>
<div style="position:absolute;top:1006.86px;font-size:15.4px;line-height:1;color:#4a4a4a;white-space:pre;letter-spacing:-0.525px;right:68.93px;">9.9%</div>
<div style="position:absolute;top:1040.16px;font-size:15.4px;line-height:1;color:#2c2c2c;white-space:pre;letter-spacing:-0.272px;right:1123.67px;">6.</div>
<div style="position:absolute;top:1040.16px;font-size:15.4px;line-height:1;color:#2c2c2c;white-space:pre;letter-spacing:-0.290px;left:881.80px;">search results</div>
<div style="position:absolute;top:1040.16px;font-size:15.4px;line-height:1;color:#2c2c2c;white-space:pre;letter-spacing:-0.417px;right:665.22px;">57,262</div>
<div style="position:absolute;top:1040.16px;font-size:15.4px;line-height:1;color:#4a4a4a;white-space:pre;letter-spacing:-0.525px;right:617.93px;">3.7%</div>
<div style="position:absolute;top:1040.16px;font-size:15.4px;line-height:1;color:#2c2c2c;white-space:pre;letter-spacing:-0.417px;right:390.22px;">47,887</div>
<div style="position:absolute;top:1040.16px;font-size:15.4px;line-height:1;color:#4a4a4a;white-space:pre;letter-spacing:-1.133px;right:343.53px;">18.0%</div>
<div style="position:absolute;top:1040.16px;font-size:15.4px;line-height:1;color:#2c2c2c;white-space:pre;letter-spacing:-0.417px;right:116.22px;">47,856</div>
<div style="position:absolute;top:1040.16px;font-size:15.4px;line-height:1;color:#4a4a4a;white-space:pre;letter-spacing:-1.133px;right:69.53px;">18.2%</div>
<div style="position:absolute;top:1073.46px;font-size:15.4px;line-height:1;color:#2c2c2c;white-space:pre;letter-spacing:-0.272px;right:1123.67px;">7.</div>
<div style="position:absolute;top:1073.46px;font-size:15.4px;line-height:1;color:#2c2c2c;white-space:pre;letter-spacing:-0.171px;left:881.80px;">category 4</div>
<div style="position:absolute;top:1073.46px;font-size:15.4px;line-height:1;color:#2c2c2c;white-space:pre;letter-spacing:-1.293px;right:666.09px;">55,411</div>
<div style="position:absolute;top:1073.46px;font-size:15.4px;line-height:1;color:#4a4a4a;white-space:pre;letter-spacing:-0.525px;right:617.93px;">3.6%</div>
<div style="position:absolute;top:1073.46px;font-size:15.4px;line-height:1;color:#2c2c2c;white-space:pre;letter-spacing:-0.417px;right:390.22px;">25,292</div>
<div style="position:absolute;top:1073.46px;font-size:15.4px;line-height:1;color:#4a4a4a;white-space:pre;letter-spacing:-0.525px;right:342.93px;">9.5%</div>
<div style="position:absolute;top:1073.46px;font-size:15.4px;line-height:1;color:#2c2c2c;white-space:pre;letter-spacing:-0.951px;right:116.75px;">25,184</div>
<div style="position:absolute;top:1073.46px;font-size:15.4px;line-height:1;color:#4a4a4a;white-space:pre;letter-spacing:-0.525px;right:68.93px;">9.6%</div>
<div style="position:absolute;top:1106.76px;font-size:15.4px;line-height:1;color:#2c2c2c;white-space:pre;letter-spacing:-0.272px;right:1123.67px;">8.</div>
<div style="position:absolute;top:1106.76px;font-size:15.4px;line-height:1;color:#2c2c2c;white-space:pre;letter-spacing:-0.191px;left:881.80px;">category 2</div>
<div style="position:absolute;top:1106.76px;font-size:15.4px;line-height:1;color:#2c2c2c;white-space:pre;letter-spacing:-0.417px;right:665.22px;">48,766</div>
<div style="position:absolute;top:1106.76px;font-size:15.4px;line-height:1;color:#4a4a4a;white-space:pre;letter-spacing:-1.325px;right:618.73px;">3.1%</div>
<div style="position:absolute;top:1106.76px;font-size:15.4px;line-height:1;color:#2c2c2c;white-space:pre;letter-spacing:-0.417px;right:390.22px;">20,727</div>
<div style="position:absolute;top:1106.76px;font-size:15.4px;line-height:1;color:#4a4a4a;white-space:pre;letter-spacing:-0.525px;right:342.93px;">7.8%</div>
<div style="position:absolute;top:1106.76px;font-size:15.4px;line-height:1;color:#2c2c2c;white-space:pre;letter-spacing:-0.417px;right:116.22px;">20,595</div>
<div style="position:absolute;top:1106.76px;font-size:15.4px;line-height:1;color:#4a4a4a;white-space:pre;letter-spacing:-0.525px;right:68.93px;">7.9%</div>
<div style="position:absolute;top:1140.06px;font-size:15.4px;line-height:1;color:#2c2c2c;white-space:pre;letter-spacing:-0.272px;right:1123.67px;">9.</div>
<div style="position:absolute;top:1140.06px;font-size:15.4px;line-height:1;color:#2c2c2c;white-space:pre;letter-spacing:0.167px;left:881.80px;">info</div>
<div style="position:absolute;top:1140.06px;font-size:15.4px;line-height:1;color:#2c2c2c;white-space:pre;letter-spacing:-0.951px;right:665.75px;">48,718</div>
<div style="position:absolute;top:1140.06px;font-size:15.4px;line-height:1;color:#4a4a4a;white-space:pre;letter-spacing:-1.325px;right:618.73px;">3.1%</div>
<div style="position:absolute;top:1140.06px;font-size:15.4px;line-height:1;color:#2c2c2c;white-space:pre;letter-spacing:-0.417px;right:390.22px;">27,425</div>
<div style="position:absolute;top:1140.06px;font-size:15.4px;line-height:1;color:#4a4a4a;white-space:pre;letter-spacing:-1.133px;right:343.53px;">10.3%</div>
<div style="position:absolute;top:1140.06px;font-size:15.4px;line-height:1;color:#2c2c2c;white-space:pre;letter-spacing:-0.417px;right:116.22px;">27,272</div>
<div style="position:absolute;top:1140.06px;font-size:15.4px;line-height:1;color:#4a4a4a;white-space:pre;letter-spacing:-1.133px;right:69.53px;">10.4%</div>
<div style="position:absolute;top:1173.36px;font-size:15.4px;line-height:1;color:#2c2c2c;white-space:pre;letter-spacing:-1.369px;right:1124.77px;">10.</div>
<div style="position:absolute;top:1173.36px;font-size:15.4px;line-height:1;color:#2c2c2c;white-space:pre;letter-spacing:-0.191px;left:881.80px;">category 5</div>
<div style="position:absolute;top:1173.36px;font-size:15.4px;line-height:1;color:#2c2c2c;white-space:pre;letter-spacing:-0.417px;right:665.22px;">48,385</div>
<div style="position:absolute;top:1173.36px;font-size:15.4px;line-height:1;color:#4a4a4a;white-space:pre;letter-spacing:-1.325px;right:618.73px;">3.1%</div>
<div style="position:absolute;top:1173.36px;font-size:15.4px;line-height:1;color:#2c2c2c;white-space:pre;letter-spacing:-0.417px;right:390.22px;">20,908</div>
<div style="position:absolute;top:1173.36px;font-size:15.4px;line-height:1;color:#4a4a4a;white-space:pre;letter-spacing:-0.525px;right:342.93px;">7.8%</div>
<div style="position:absolute;top:1173.36px;font-size:15.4px;line-height:1;color:#2c2c2c;white-space:pre;letter-spacing:-0.417px;right:116.22px;">20,799</div>
<div style="position:absolute;top:1173.36px;font-size:15.4px;line-height:1;color:#4a4a4a;white-space:pre;letter-spacing:-0.525px;right:68.93px;">7.9%</div>
<div style="position:absolute;left:1566px;top:1200.7px;width:417px;height:60px;background:#2861c5;border-radius:6px 6px 0 0;box-shadow:0 0 14px rgba(0,0,0,0.36);"></div>
<div style="position:absolute;top:1217.56px;font-size:15.4px;line-height:1;color:#ffffff;white-space:pre;letter-spacing:-0.132px;left:1577.80px;">New Analytics Features</div>
<svg style="position:absolute;left:1958px;top:1220.8px" width="10" height="10" viewBox="0 0 10 10"><path d="M1.2 1.2 L8.8 8.8 M8.8 1.2 L1.2 8.8" stroke="#e8eefb" stroke-width="1.6" stroke-linecap="round"/></svg>
</div>
</body></html>
